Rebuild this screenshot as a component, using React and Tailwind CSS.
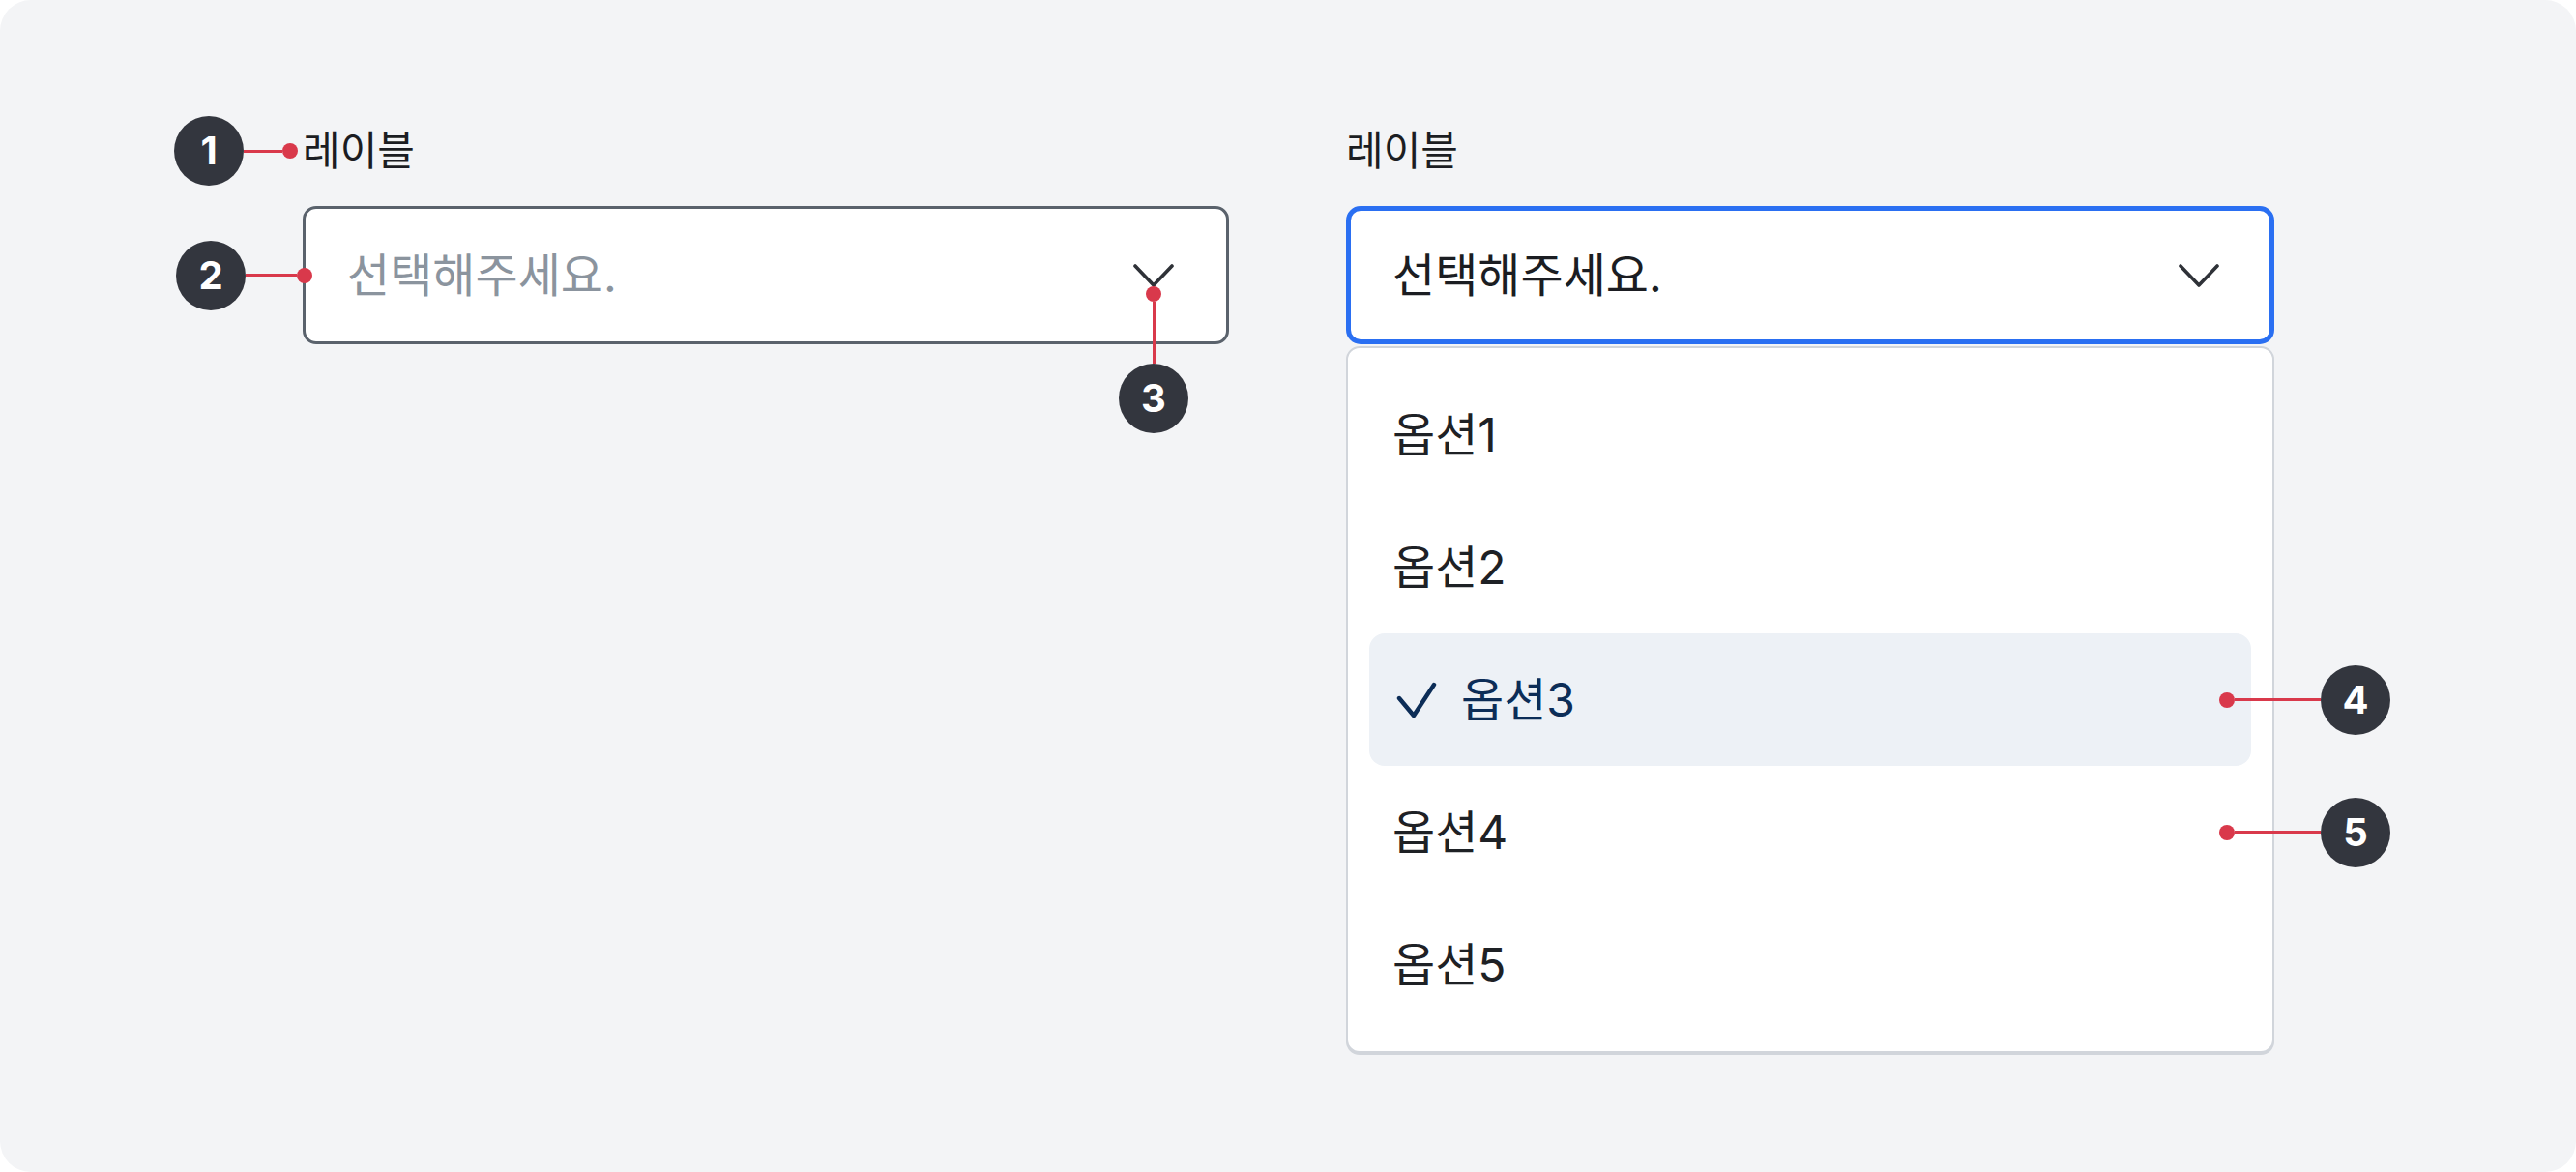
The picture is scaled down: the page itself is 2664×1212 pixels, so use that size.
import React from "react";

const FONT = { fontFamily: 'Inter, "Noto Sans CJK KR", sans-serif' };

function Badge({ n }) {
  return (
    <div className="flex h-[72px] w-[72px] shrink-0 items-center justify-center rounded-full bg-[#33363e] text-[40px] font-bold leading-none text-white">
      {n}
    </div>
  );
}

function Dot() {
  return <div className="h-[16px] w-[16px] shrink-0 rounded-full bg-[#d9394b]" />;
}

function Chevron() {
  return (
    <svg width="42" height="26" viewBox="0 0 42 26" fill="none" className="block">
      <path d="M2 3 L21 23 L40 3" stroke="#2f3238" strokeWidth="3.6" strokeLinecap="round" strokeLinejoin="round" />
    </svg>
  );
}

function Check() {
  return (
    <svg width="42" height="38" viewBox="0 0 42 38" fill="none" className="block shrink-0">
      <path d="M3 17 L18 35 L39 3" stroke="#0c2d57" strokeWidth="4.4" strokeLinecap="round" strokeLinejoin="round" />
    </svg>
  );
}

function SideNote({ n }) {
  return (
    <div className="absolute -right-[144px] top-1/2 flex -translate-y-1/2 items-center">
      <Dot />
      <div className="h-[3px] w-[89px] bg-[#d9394b]" />
      <Badge n={n} />
    </div>
  );
}

export default function App() {
  const options = ["옵션1", "옵션2", "옵션3", "옵션4", "옵션5"];
  return (
    <div className="h-[1212px] w-[2664px] bg-white" style={FONT}>
      <div className="flex h-full w-full gap-[121px] rounded-[32px] bg-[#f3f4f6] pl-[313px] pt-[131px]">
        {/* Left select */}
        <div className="flex w-[958px] flex-col">
          <div className="relative flex h-[50px] items-center text-[42px] leading-none text-[#1b1d22]">
            <div className="absolute right-full mr-[5px] top-1/2 flex -translate-y-1/2 items-center">
              <Badge n="1" />
              <div className="h-[3px] w-[40px] bg-[#d9394b]" />
              <Dot />
            </div>
            레이블
          </div>
          <div className="relative mt-[32px] flex h-[143px] items-center justify-between rounded-[14px] border-[3px] border-[#5a626c] bg-white pl-[43px] pr-[54px]">
            <div className="absolute -left-[134px] top-1/2 flex -translate-y-1/2 items-center">
              <Badge n="2" />
              <div className="h-[3px] w-[53px] bg-[#d9394b]" />
              <Dot />
            </div>
            <span className="text-[48px] leading-none text-[#8b949e]">선택해주세요.</span>
            <div className="relative">
              <Chevron />
              <div className="absolute left-1/2 top-[24px] flex -translate-x-1/2 flex-col items-center">
                <Dot />
                <div className="h-[64px] w-[3px] bg-[#d9394b]" />
                <Badge n="3" />
              </div>
            </div>
          </div>
        </div>

        {/* Right select (open) */}
        <div className="flex w-[960px] flex-col">
          <div className="flex h-[50px] items-center text-[42px] leading-none text-[#1b1d22]">레이블</div>
          <div className="mt-[32px] flex h-[143px] items-center justify-between rounded-[15px] border-[5px] border-[#2a6ff2] bg-white pl-[43px] pr-[52px]">
            <span className="text-[48px] leading-none text-[#1b1d22]">선택해주세요.</span>
            <Chevron />
          </div>
          <div className="mt-[2px] flex flex-col rounded-[14px] border-2 border-[#d1d5db] bg-white px-[22px] py-[21px] shadow-[0_2px_0_#d1d5db]">
            {options.map((o, i) => {
              const selected = i === 2;
              return (
                <div
                  key={o}
                  className={
                    selected
                      ? "relative flex h-[137px] items-center gap-[25px] rounded-[16px] bg-[#edf1f6] pl-[28px] text-[48px] leading-none text-[#0c2d57]"
                      : "relative flex h-[137px] items-center pl-[24px] text-[48px] leading-none text-[#1e2125]"
                  }
                >
                  {selected && <Check />}
                  <span>{o}</span>
                  {i === 2 && <SideNote n="4" />}
                  {i === 3 && <SideNote n="5" />}
                </div>
              );
            })}
          </div>
        </div>
      </div>
    </div>
  );
}
